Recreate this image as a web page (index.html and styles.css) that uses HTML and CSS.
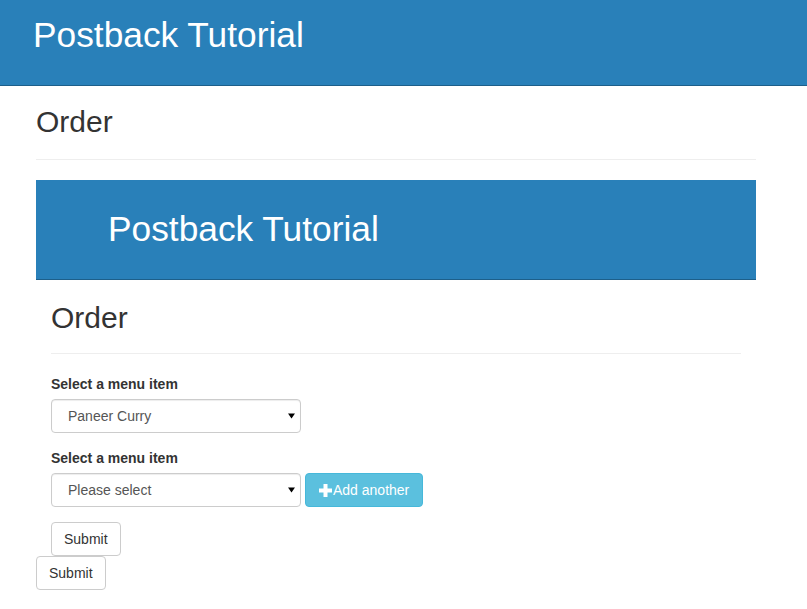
FILE: index.html
```html
<!DOCTYPE html>
<html>
<head>
<meta charset="utf-8">
<link rel="stylesheet" href="styles.css">
</head>
<body>
<div class="navbar">
  <h1 class="brand">Postback Tutorial</h1>
</div>
<div class="container">
  <div class="page-header"><h2>Order</h2></div>
  <div class="frame">
    <div class="navbar inner-nav">
      <h1 class="brand">Postback Tutorial</h1>
    </div>
    <div class="frame-body">
      <div class="page-header inner-header"><h2>Order</h2></div>
      <div class="form-group">
        <label class="label">Select a menu item</label>
        <div class="row">
          <span class="select-wrap">
            <select class="select"><option>Paneer Curry</option></select>
            <svg class="caret" width="7" height="6" viewBox="0 0 7 6"><path d="M0 0.5H7L3.5 5.5Z" fill="#000"/></svg>
          </span>
        </div>
      </div>
      <div class="form-group">
        <label class="label">Select a menu item</label>
        <div class="row">
          <span class="select-wrap">
            <select class="select"><option>Please select</option></select>
            <svg class="caret" width="7" height="6" viewBox="0 0 7 6"><path d="M0 0.5H7L3.5 5.5Z" fill="#000"/></svg>
          </span>
          <button class="btn btn-info"><svg class="plus" width="13" height="13" viewBox="0 0 13 13"><path d="M4.5 0H8.5V4.5H13V8.5H8.5V13H4.5V8.5H0V4.5H4.5Z" fill="#fff"/></svg>Add another</button>
        </div>
      </div>
      <button class="btn btn-default">Submit</button>
    </div>
  </div>
  <button class="btn btn-default">Submit</button>
</div>
</body>
</html>
```
FILE: styles.css
```css
* { box-sizing: border-box; }
body {
  margin: 0;
  font-family: "Liberation Sans", Arial, sans-serif;
  font-size: 14px;
  line-height: 1.42857;
  color: #333;
  background: #fff;
}
.navbar {
  height: 86px;
  background: #2980b9;
  border-bottom: 1px solid #1d5f8a;
  padding: 16px 0 0 33px;
}
.brand {
  margin: 0;
  font-size: 35.3px;
  font-weight: 400;
  line-height: 1.1;
  color: #fff;
}
.container {
  width: 720px;
  margin-left: 36px;
  padding-bottom: 20px;
}
.page-header {
  margin: 19px 0 20px;
  padding-bottom: 21px;
  border-bottom: 1px solid #eee;
}
.page-header h2 {
  margin: 0;
  font-size: 30px;
  font-weight: 400;
  line-height: 1.1;
  color: #333;
}
.inner-nav {
  height: 100px;
  padding: 30px 0 0 72px;
}
.frame-body {
  padding: 0 15px;
}
.inner-header {
  margin: 21px 0 20px;
  padding-bottom: 19px;
}
.form-group {
  margin-bottom: 15px;
}
.label {
  display: block;
  font-weight: 700;
  margin-bottom: 5px;
  line-height: 20px;
}
.row {
  display: flex;
  align-items: center;
  gap: 4px;
}
.select-wrap {
  position: relative;
  display: block;
  width: 250px;
  height: 34px;
}
.select {
  appearance: none;
  -webkit-appearance: none;
  width: 250px;
  height: 34px;
  padding: 6px 12px 6px 16px;
  font-family: "Liberation Sans", Arial, sans-serif;
  font-size: 14px;
  color: #555;
  background: #fff;
  border: 1px solid #ccc;
  border-radius: 4px;
  box-shadow: inset 0 1px 1px rgba(0,0,0,0.075);
}
.caret {
  position: absolute;
  right: 6px;
  top: 14px;
}
.btn {
  display: inline-flex;
  align-items: center;
  height: 34px;
  padding: 6px 12px;
  font-family: "Liberation Sans", Arial, sans-serif;
  font-size: 14px;
  line-height: 20px;
  border: 1px solid transparent;
  border-radius: 4px;
  cursor: pointer;
}
.btn-default {
  color: #333;
  background: #fff;
  border-color: #ccc;
}
.btn-info {
  color: #fff;
  background: #5bc0de;
  border-color: #46b8da;
  padding-right: 13px;
  padding-left: 13px;
}
.plus {
  margin-right: 1px;
}
```
